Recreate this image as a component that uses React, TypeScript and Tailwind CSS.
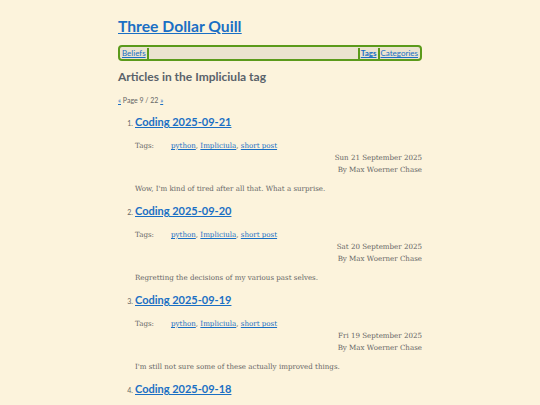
import React from "react";

const posts = [
  {
    title: "Coding 2025-09-21",
    date: "Sun 21 September 2025",
    summary: "Wow, I'm kind of tired after all that. What a surprise.",
  },
  {
    title: "Coding 2025-09-20",
    date: "Sat 20 September 2025",
    summary: "Regretting the decisions of my various past selves.",
  },
  {
    title: "Coding 2025-09-19",
    date: "Fri 19 September 2025",
    summary: "I'm still not sure some of these actually improved things.",
  },
  // only the heading of this one fits in the window
  { title: "Coding 2025-09-18" },
];

const sans = "font-['Lato','Noto_Sans',sans-serif]";
const serif = "font-['DejaVu_Serif','Liberation_Serif',serif]";
const link = "text-[#1a6fc4] underline";

function Sep() {
  return <span className="inline-block w-[2px] h-[11px] bg-[#5b9a1b] mx-[1px]" />;
}

export default function App() {
  return (
    <div className="h-[405px] bg-[#fcf3dc] overflow-hidden">
      <div className="w-[304px] mx-auto pt-[15px]">
        <h1 className={`${sans} text-[15.7px] font-bold leading-[23px] ${link}`}>
          <a href="#">Three Dollar Quill</a>
        </h1>

        {/* nav */}
        <nav
          className={`${sans} mt-[7px] h-[16px] flex items-center border-2 border-[#5b9a1b] rounded-[4px] bg-[#ebe3cf] px-[2px] text-[8px]`}
        >
          <a href="#" className={link}>
            Beliefs
          </a>
          <Sep />
          <div className="flex-1" />
          <Sep />
          <a href="#" className={`${link} font-bold`}>
            Tags
          </a>
          <Sep />
          <a href="#" className={link}>
            Categories
          </a>
        </nav>

        <h2 className={`${sans} mt-[7px] text-[12px] font-bold leading-[18px] text-[#59626a]`}>
          Articles in the Impliciula tag
        </h2>

        <p className={`${sans} mt-[9px] text-[7px] text-[#666] leading-[10px]`}>
          <a href="#" className={link}>
            «
          </a>{" "}
          Page 9 / 22{" "}
          <a href="#" className={link}>
            »
          </a>
        </p>

        <ol className="mt-[8px] pl-[17px]">
          {posts.map((p, i) => (
            <li key={p.title} className="h-[89px]">
              <div className="flex items-baseline">
                <span className={`${sans} w-[10px] -ml-[10px] text-right pr-[2px] text-[7px] text-[#666]`}>
                  {i + 1}.
                </span>
                <a href="#" className={`${sans} text-[11px] font-bold leading-[18px] ${link}`}>
                  {p.title}
                </a>
              </div>
              {p.date && (
                <div className={`${serif} text-[7.1px] text-[#666] leading-[12px]`}>
                  <div className="mt-[9px] flex">
                    <span className="w-[36px]">Tags:</span>
                    <span>
                      <a href="#" className={link}>
                        python
                      </a>
                      ,{" "}
                      <a href="#" className={link}>
                        Impliciula
                      </a>
                      ,{" "}
                      <a href="#" className={link}>
                        short post
                      </a>
                    </span>
                  </div>
                  <div className="text-right">{p.date}</div>
                  <div className="text-right">By Max Woerner Chase</div>
                  <p className="mt-[7px]">{p.summary}</p>
                </div>
              )}
            </li>
          ))}
        </ol>
      </div>
    </div>
  );
}
